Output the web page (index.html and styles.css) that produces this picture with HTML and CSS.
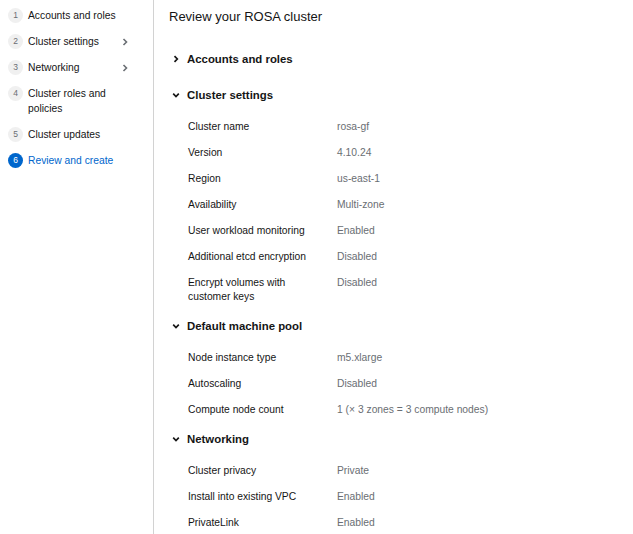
FILE: index.html
```html
<!DOCTYPE html>
<html lang="en">
<head>
<meta charset="utf-8">
<title>Review your ROSA cluster</title>
<link rel="stylesheet" href="styles.css">
</head>
<body>
<div class="page">
  <nav class="wizard-nav">
    <ol class="steps">
      <li class="step"><span class="num">1</span><span class="label">Accounts and roles</span></li>
      <li class="step"><span class="num">2</span><span class="label">Cluster settings</span><svg class="nav-chev" viewBox="0 0 6 8" width="6" height="8"><path d="M1.5 1 L4.5 4 L1.5 7" fill="none" stroke="#6a6e73" stroke-width="1.6"/></svg></li>
      <li class="step"><span class="num">3</span><span class="label">Networking</span><svg class="nav-chev" viewBox="0 0 6 8" width="6" height="8"><path d="M1.5 1 L4.5 4 L1.5 7" fill="none" stroke="#6a6e73" stroke-width="1.6"/></svg></li>
      <li class="step"><span class="num">4</span><span class="label">Cluster roles and<br>policies</span></li>
      <li class="step"><span class="num">5</span><span class="label">Cluster updates</span></li>
      <li class="step active"><span class="num">6</span><span class="label">Review and create</span></li>
    </ol>
  </nav>
  <main class="content">
    <h1 class="title">Review your ROSA cluster</h1>

    <section class="section">
      <div class="toggle"><svg class="chev" viewBox="0 0 8 8" width="8" height="8"><path d="M2.5 1.2 L5.3 4 L2.5 6.8" fill="none" stroke="#151515" stroke-width="1.7"/></svg><span>Accounts and roles</span></div>
    </section>

    <section class="section">
      <div class="toggle"><svg class="chev" viewBox="0 0 8 8" width="8" height="8"><path d="M1.2 2.7 L4 5.5 L6.8 2.7" fill="none" stroke="#151515" stroke-width="1.7"/></svg><span>Cluster settings</span></div>
      <dl class="rows">
        <dt>Cluster name</dt><dd>rosa-gf</dd>
        <dt>Version</dt><dd>4.10.24</dd>
        <dt>Region</dt><dd>us-east-1</dd>
        <dt>Availability</dt><dd>Multi-zone</dd>
        <dt>User workload monitoring</dt><dd>Enabled</dd>
        <dt>Additional etcd encryption</dt><dd>Disabled</dd>
        <dt>Encrypt volumes with<br>customer keys</dt><dd>Disabled</dd>
      </dl>
    </section>

    <section class="section">
      <div class="toggle"><svg class="chev" viewBox="0 0 8 8" width="8" height="8"><path d="M1.2 2.7 L4 5.5 L6.8 2.7" fill="none" stroke="#151515" stroke-width="1.7"/></svg><span>Default machine pool</span></div>
      <dl class="rows">
        <dt>Node instance type</dt><dd>m5.xlarge</dd>
        <dt>Autoscaling</dt><dd>Disabled</dd>
        <dt>Compute node count</dt><dd>1 (× 3 zones = 3 compute nodes)</dd>
      </dl>
    </section>

    <section class="section">
      <div class="toggle"><svg class="chev" viewBox="0 0 8 8" width="8" height="8"><path d="M1.2 2.7 L4 5.5 L6.8 2.7" fill="none" stroke="#151515" stroke-width="1.7"/></svg><span>Networking</span></div>
      <dl class="rows">
        <dt>Cluster privacy</dt><dd>Private</dd>
        <dt>Install into existing VPC</dt><dd>Enabled</dd>
        <dt>PrivateLink</dt><dd>Enabled</dd>
      </dl>
    </section>
  </main>
</div>
</body>
</html>
```

FILE: styles.css
```css
* { box-sizing: border-box; }
html, body { margin: 0; padding: 0; background: #fff; }
body {
  font-family: "Liberation Sans", Arial, sans-serif;
  color: #151515;
  font-size: 10.3px;
  overflow: hidden;
  height: 534px;
}
.page {
  display: flex;
  height: 534px;
}
.wizard-nav {
  width: 154px;
  flex: none;
  border-right: 1px solid #d2d2d2;
  padding-top: 3px;
}
.steps {
  list-style: none;
  margin: 0;
  padding: 0 0 0 8px;
}
.step {
  display: flex;
  align-items: flex-start;
  padding: 5px 0 6px;
  line-height: 15px;
}
.num {
  flex: none;
  width: 15px;
  height: 15px;
  border-radius: 50%;
  background: #f0f0f0;
  color: #6a6e73;
  font-size: 8.5px;
  line-height: 15px;
  text-align: center;
  margin-right: 5px;
}
.label { flex: none; width: 94px; }
.nav-chev { margin-top: 3.5px; }
.step.active .num { background: #0066cc; color: #fff; }
.step.active .label { color: #0066cc; }

.content {
  flex: 1;
  padding: 8px 0 0 15px;
}
.title {
  margin: 0 0 15px;
  font-size: 13px;
  font-weight: 400;
  line-height: 18px;
}
.toggle {
  display: flex;
  align-items: center;
  height: 36px;
  font-size: 11.4px;
  font-weight: 700;
  line-height: 14px;
  padding-left: 3px;
}
.chev { margin-right: 7px; }
.rows {
  margin: 1px 0 -2px;
  padding-left: 19px;
  display: grid;
  grid-template-columns: 149px 1fr;
  line-height: 14px;
}
.rows dt, .rows dd {
  margin: 0;
  padding: 6px 0;
}
.rows dd { color: #6a6e73; }
```
